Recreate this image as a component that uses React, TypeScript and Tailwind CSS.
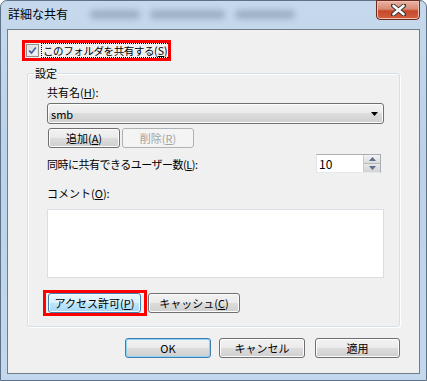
import React from "react";

const btnBase =
  "flex items-center justify-center whitespace-nowrap rounded-[3px] border text-[11px] leading-[14px]";
const grayBtn =
  "border-[#707070] bg-[linear-gradient(#f2f2f2_0%,#ebebeb_49%,#dddddd_50%,#cfcfcf_100%)] shadow-[inset_0_0_0_1px_#fcfcfc]";

function U({ children }: { children: React.ReactNode }) {
  return <span className="underline underline-offset-[1px]">{children}</span>;
}

export default function App() {
  return (
    <div className="w-[427px] h-[381px] overflow-hidden font-['Noto_Sans_CJK_JP','Liberation_Sans',sans-serif] text-black">
      <div className="flex h-full w-full flex-col rounded-t-[7px] border border-[#5e7389] bg-[linear-gradient(to_bottom,#c6d9ec,#bcd2e8_40%,#c3d8ec)] px-[6px]">
        {/* title bar */}
        <div className="flex h-[28px] shrink-0 items-start">
          <div className="mt-[5px] pl-[1px] text-[12px] leading-[16px] text-black">詳細な共有</div>
          <div className="ml-[22px] mt-[9px] flex gap-[10px] opacity-40">
            <div className="h-[9px] w-[50px] rounded bg-[#5d7088] blur-[3px]" />
            <div className="h-[9px] w-[75px] rounded bg-[#5d7088] blur-[3px]" />
            <div className="h-[9px] w-[60px] rounded bg-[#5d7088] blur-[3px]" />
          </div>
          <div className="-mt-[1px] ml-auto flex h-[20px] w-[44px] items-center justify-center rounded-b-[4px] border border-[#6a2c20] bg-[linear-gradient(#eab3a3_0%,#d98a73_45%,#c8472b_55%,#d0613f_100%)] shadow-[inset_0_0_0_1px_#f0c0b0]">
            <svg width="15" height="12" viewBox="0 0 15 12">
              <path
                d="M2 1.5 L13 10.5 M13 1.5 L2 10.5"
                stroke="#3a3a3a"
                strokeWidth="4.4"
                strokeLinecap="round"
              />
              <path
                d="M2.4 1.8 L12.6 10.2 M12.6 1.8 L2.4 10.2"
                stroke="#ffffff"
                strokeWidth="2.4"
                strokeLinecap="round"
              />
            </svg>
          </div>
        </div>

        {/* client area */}
        <div className="flex h-[345px] shrink-0 flex-col border border-[#6f7c8a] bg-[#f0f0f0] text-[11px] leading-[14px]">
          {/* checkbox with red highlight */}
          <div className="ml-[14px] mt-[10px] flex h-[21px] w-[149px] items-center border-[3px] border-[#ff0000] pl-[1px]">
            <div className="flex h-[13px] w-[13px] shrink-0 items-center justify-center border border-[#8e8f8f] bg-white">
              <div className="flex h-[11px] w-[11px] items-center justify-center border border-[#e8e8e8] bg-[linear-gradient(135deg,#d4d8de,#f6f7f8)]">
                <svg width="9" height="9" viewBox="0 0 9 9">
                  <path
                    d="M1.2 4.6 L3.5 7 L7.8 1.6"
                    fill="none"
                    stroke="#3f5d9a"
                    strokeWidth="1.6"
                  />
                </svg>
              </div>
            </div>
            <div className="ml-[2px] shrink-0 whitespace-nowrap border border-dotted border-black pl-[1px] pr-[1px] text-[10.5px] leading-[13px]">
              <span className="tracking-[-0.4px]">このフォルダを共有する</span>
              <span>
                (<U>S</U>)
              </span>
            </div>
          </div>

          {/* group box */}
          <div className="relative ml-[19px] mt-[12px] flex h-[254px] w-[373px] flex-col rounded-[3px] border border-[#d5dfe5] pl-[19px] pr-[15px] pt-[11px] shadow-[inset_1px_1px_0_#ffffff,1px_1px_0_#ffffff]">
            <div className="absolute -top-[8px] left-[6px] bg-[#f0f0f0] px-[1px] leading-[14px]">
              設定
            </div>

            <div>
              共有名(<U>H</U>):
            </div>

            <div className="mt-[4px] flex h-[21px] items-center justify-between rounded-[3px] border border-[#707070] bg-[linear-gradient(#f2f2f2_0%,#ebebeb_49%,#dddddd_50%,#cfcfcf_100%)] pl-[3px] pr-[5px] shadow-[inset_0_0_0_1px_#fcfcfc]">
              <span>smb</span>
              <svg width="7" height="4" viewBox="0 0 7 4">
                <path d="M0 0 H7 L3.5 4 Z" fill="#000" />
              </svg>
            </div>

            <div className="ml-[1px] mt-[4px] flex gap-[2px]">
              <div className={`${btnBase} ${grayBtn} h-[20px] w-[72px]`}>
                追加(<U>A</U>)
              </div>
              <div
                className={`${btnBase} h-[20px] w-[72px] border-[#adb2b5] bg-[#f4f4f4] text-[#a3a3a3]`}
              >
                削除(<U>R</U>)
              </div>
            </div>

            <div className="mt-[6px] flex h-[19px] items-center justify-between pr-[3px]">
              <div className="whitespace-nowrap tracking-[-0.5px]">
                同時に共有できるユーザー数(<U>L</U>):
              </div>
              <div className="flex h-[19px] w-[65px] border border-[#abadb3] border-l-[#e2e3ea] border-b-[#e3e9ef] bg-white">
                <div className="flex-1 pl-[2px] text-[12px] leading-[17px]">10</div>
                <div className="flex w-[17px] flex-col border-l border-[#c9cbd0] bg-[#e4e4e4]">
                  <div className="flex flex-1 items-center justify-center border-b border-[#b9b9b9] bg-[linear-gradient(#f4f4f4,#dcdcdc)]">
                    <svg width="7" height="4" viewBox="0 0 7 4">
                      <path d="M0 4 H7 L3.5 0 Z" fill="#5c6f8f" />
                    </svg>
                  </div>
                  <div className="flex flex-1 items-center justify-center bg-[linear-gradient(#e8e8e8,#d3d3d3)]">
                    <svg width="7" height="4" viewBox="0 0 7 4">
                      <path d="M0 0 H7 L3.5 4 Z" fill="#5c6f8f" />
                    </svg>
                  </div>
                </div>
              </div>
            </div>

            <div className="mt-[13px]">
              コメント(<U>O</U>):
            </div>

            <div className="mt-[9px] h-[69px] border border-[#dadde4] bg-white" />

            <div className="-ml-[4px] mt-[12px] flex items-center">
              <div className="flex h-[26px] w-[104px] items-center border-[3px] border-[#ff0000] pl-[2px]">
                <div
                  className={`${btnBase} h-[20px] w-[93px] border-[#3c7fb1] bg-[linear-gradient(#eaf6fd_0%,#d9f0fc_49%,#bee6fd_50%,#a7d9f5_100%)] shadow-[inset_0_0_0_1px_#f4fbff]`}
                >
                  アクセス許可(<U>P</U>)
                </div>
              </div>
              <div className={`${btnBase} ${grayBtn} ml-[1px] h-[20px] w-[92px]`}>
                キャッシュ(<U>C</U>)
              </div>
            </div>
          </div>

          {/* bottom buttons */}
          <div className="mt-[11px] flex justify-end pr-[19px]">
            <div
              className={`${btnBase} h-[20px] w-[86px] border-[#3c7fb1] bg-[linear-gradient(#f2f2f2_0%,#ebebeb_49%,#dddddd_50%,#cfcfcf_100%)] shadow-[inset_0_0_0_1px_#8fd3f3]`}
            >
              OK
            </div>
            <div className={`${btnBase} ${grayBtn} ml-[8px] h-[20px] w-[86px]`}>
              キャンセル
            </div>
            <div className={`${btnBase} ${grayBtn} ml-[10px] h-[20px] w-[85px]`}>
              適用
            </div>
          </div>
        </div>
      </div>
    </div>
  );
}
